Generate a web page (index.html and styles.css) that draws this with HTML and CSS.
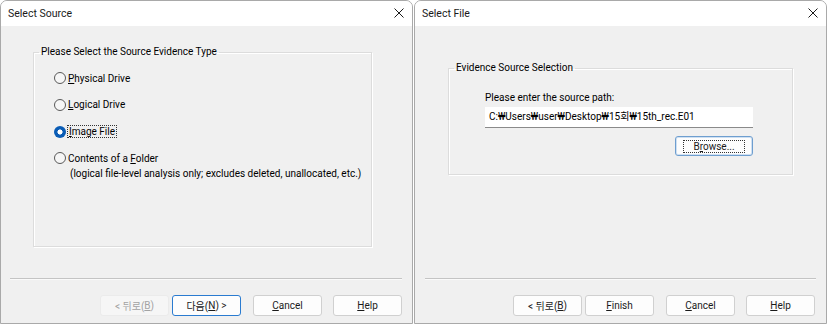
FILE: index.html
```html
<!DOCTYPE html>
<html lang="ko">
<head>
    <meta charset="UTF-8">
    <title>Evidence Source Wizard</title>
    <link rel="stylesheet" href="styles.css">
</head>
<body>
    <div class="dialog dialog-left">
        <div class="titlebar">
            <span class="title">Select Source</span>
            <svg class="close" viewBox="0 0 10 10" fill="none" stroke="#1a1a1a" stroke-width="1">
                <path d="M0.5 0.5 9.5 9.5"/>
                <path d="M9.5 0.5 0.5 9.5"/>
            </svg>
        </div>
        <div class="content">
            <fieldset class="group group-type">
                <legend>Please Select the Source Evidence Type</legend>
                <div class="group-body">
                    <div class="radio"><span class="dot"></span><span><u>P</u>hysical Drive</span></div>
                    <div class="radio"><span class="dot"></span><span><u>L</u>ogical Drive</span></div>
                    <div class="radio"><span class="dot checked"></span><span class="focus"><u>I</u>mage File</span></div>
                    <div class="radio radio-last"><span class="dot"></span><span>Contents of a <u>F</u>older</span></div>
                    <div class="note">(logical file-level analysis only; excludes deleted, unallocated, etc.)</div>
                </div>
            </fieldset>
        </div>
        <div class="separator"></div>
        <div class="buttons">
            <button class="btn disabled">&lt; 뒤로(<u>B</u>)</button>
            <button class="btn default">다음(<u>N</u>) &gt;</button>
            <button class="btn gap"><u>C</u>ancel</button>
            <button class="btn gap-sm"><u>H</u>elp</button>
        </div>
    </div>

    <div class="dialog dialog-right">
        <div class="titlebar">
            <span class="title">Select File</span>
            <svg class="close" viewBox="0 0 10 10" fill="none" stroke="#1a1a1a" stroke-width="1">
                <path d="M0.5 0.5 9.5 9.5"/>
                <path d="M9.5 0.5 0.5 9.5"/>
            </svg>
        </div>
        <div class="content">
            <fieldset class="group group-file">
                <legend>Evidence Source Selection</legend>
                <div class="group-body">
                    <div class="path-label">Please enter the source path:</div>
                    <div class="path-input">C:₩Users₩user₩Desktop₩15회₩15th_rec.E01</div>
                    <div class="browse-row">
                        <button class="btn browse"><span class="focus">B<u>r</u>owse...</span></button>
                    </div>
                </div>
            </fieldset>
        </div>
        <div class="separator"></div>
        <div class="buttons">
            <button class="btn">&lt; 뒤로(<u>B</u>)</button>
            <button class="btn"><u>F</u>inish</button>
            <button class="btn gap"><u>C</u>ancel</button>
            <button class="btn gap-sm"><u>H</u>elp</button>
        </div>
    </div>
</body>
</html>
```

FILE: styles.css
```css
* {
    margin: 0;
    padding: 0;
    box-sizing: border-box;
}

body {
    font-family: Roboto, "Noto Sans CJK KR", sans-serif;
    font-size: 10px;
    color: #000000;
    background: #ffffff;
    width: 827px;
    height: 324px;
    display: flex;
    overflow: hidden;
}

u {
    text-decoration: underline;
    text-underline-offset: 1px;
}

.dialog {
    height: 324px;
    display: flex;
    flex-direction: column;
    background: #f0f0f0;
    border: 1px solid #a9a9a9;
    border-radius: 7px 7px 0 0;
    overflow: hidden;
}

.dialog-left {
    width: 413px;
}

.dialog-right {
    width: 413px;
    margin-left: 1px;
}

.titlebar {
    height: 25px;
    flex: none;
    background: #ffffff;
    display: flex;
    align-items: center;
    justify-content: space-between;
    padding: 0 8px 1px 7px;
}

.title {
    font-size: 10.5px;
    color: #1a1a1a;
}

.close {
    width: 10px;
    height: 10px;
}

.content {
    flex: 1;
    display: flex;
    align-items: flex-start;
}

.group {
    border: 1px solid #dcdcdc;
    box-shadow: inset 1px 1px 0 #ffffff, 1px 1px 0 #ffffff;
    padding: 0;
}

.group legend {
    margin-left: 5px;
    padding: 0 2px;
    line-height: 14px;
}

.group-type {
    margin: 19px 0 0 32px;
    width: 339px;
    height: 202px;
}

.group-type .group-body {
    padding: 11px 0 0 20px;
}

.radio {
    display: flex;
    align-items: center;
    gap: 2px;
    height: 16px;
    margin-bottom: 10.8px;
}

.radio-last {
    margin-bottom: 0;
}

.dot {
    width: 12px;
    height: 12px;
    border-radius: 50%;
    border: 1px solid #595959;
    background: #f6f6f6;
    flex: none;
}

.dot.checked {
    border: none;
    background: radial-gradient(circle, #ffffff 0 2.3px, #0a5cb5 2.8px);
}

.focus {
    outline: 1px dotted #333333;
    outline-offset: 0;
    padding: 0 1px;
}

.note {
    padding-left: 16px;
    line-height: 16px;
}

.group-file {
    margin: 35px 0 0 33px;
    width: 345px;
    height: 114px;
}

.group-file .group-body {
    padding: 15px 0 0 36px;
}

.path-label {
    line-height: 15px;
}

.path-input {
    width: 268px;
    height: 21px;
    margin-top: 2px;
    background: #ffffff;
    border-bottom: 1px solid #8a8a8a;
    padding: 0 0 0 4px;
    line-height: 19px;
}

.browse-row {
    display: flex;
    justify-content: flex-end;
    width: 268px;
    margin-top: 8px;
}

.separator {
    flex: none;
    height: 2px;
    margin: 0 10px 15px 9px;
    border-top: 1px solid #c4c4c4;
    border-bottom: 1px solid #fafafa;
}

.dialog-right .separator {
    margin: 0 10px 15px 10px;
}

.buttons {
    flex: none;
    display: flex;
    justify-content: flex-end;
    padding: 0 10px 7px 0;
}

.dialog-right .buttons {
    padding-right: 11px;
}

.btn {
    font-family: inherit;
    font-size: 10px;
    width: 69px;
    height: 21px;
    background: #fdfdfd;
    border: 1px solid #d0d0d0;
    border-radius: 3px;
    color: #1a1a1a;
    margin-left: 3px;
    display: flex;
    align-items: center;
    justify-content: center;
}

.btn.gap {
    margin-left: 12px;
}

.btn.gap-sm {
    margin-left: 11px;
}

.btn.disabled {
    background: #f6f6f6;
    border-color: #ebebeb;
    color: #a3a3a3;
}

.btn.default {
    border-color: #2a7bd0;
}

.btn.browse {
    width: 78px;
    height: 20px;
    border: 1px solid #6e9ecf;
    box-shadow: inset 0 0 0 1px #cfe0f2;
}

.btn.browse .focus {
    padding: 0 9px;
}
```
